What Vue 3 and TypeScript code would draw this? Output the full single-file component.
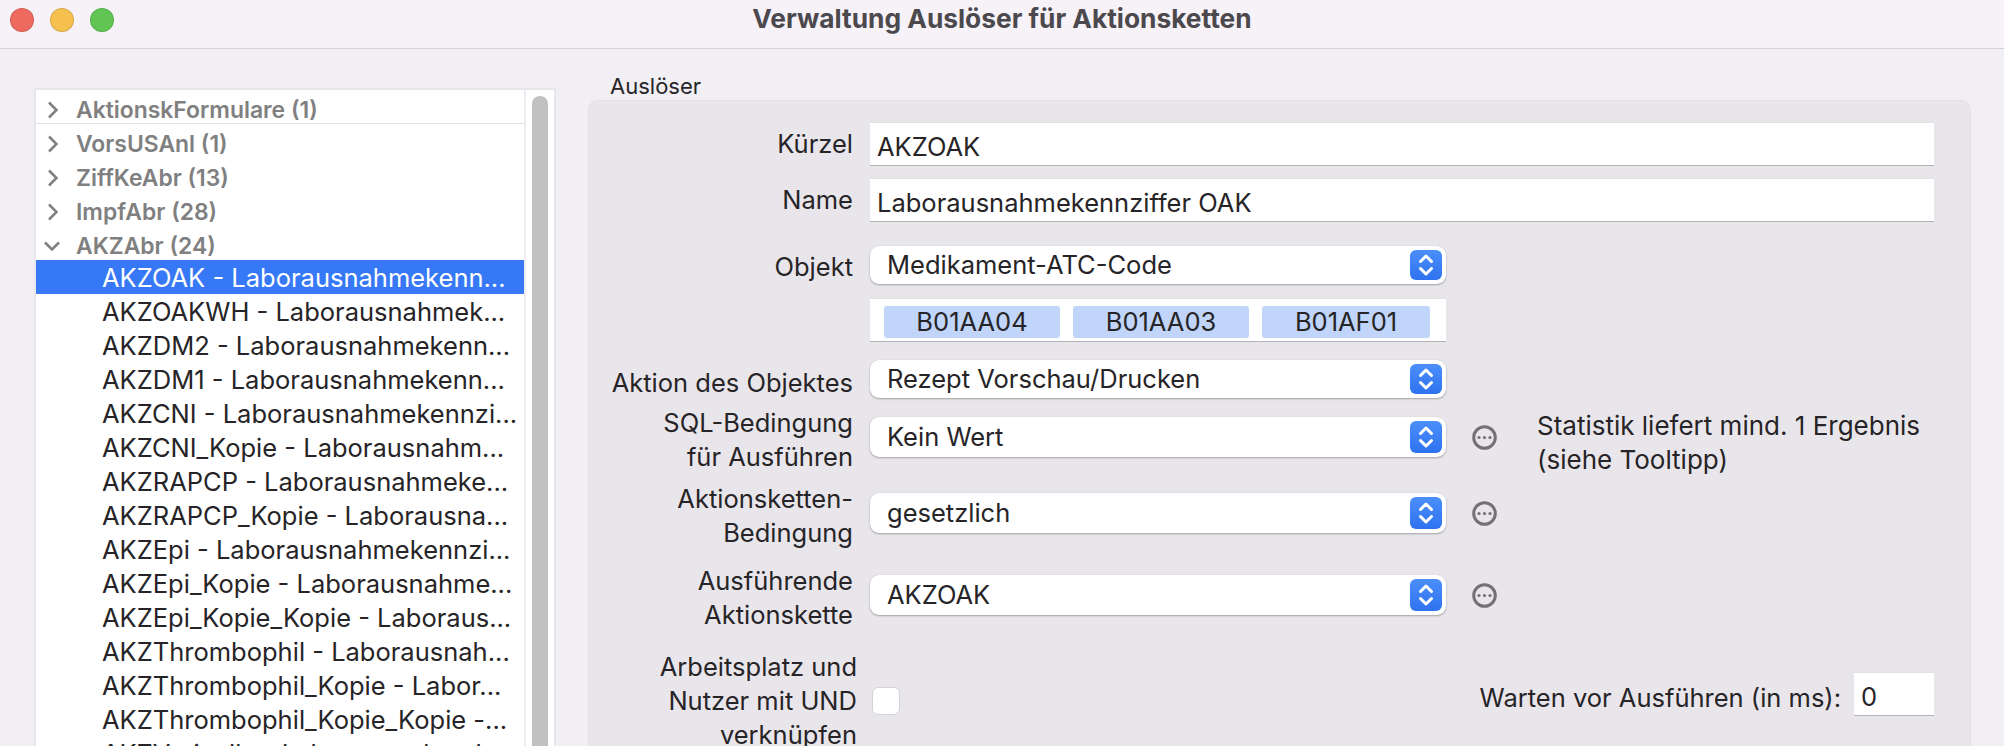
<script setup lang="ts">
interface Group { name: string; open?: boolean }
const groups: Group[] = [
  { name: 'AktionskFormulare (1)' },
  { name: 'VorsUSAnl (1)' },
  { name: 'ZiffKeAbr (13)' },
  { name: 'ImpfAbr (28)' },
  { name: 'AKZAbr (24)', open: true },
]
const items: string[] = [
  'AKZOAK - Laborausnahmekenn...',
  'AKZOAKWH - Laborausnahmek...',
  'AKZDM2 - Laborausnahmekenn...',
  'AKZDM1 - Laborausnahmekenn...',
  'AKZCNI - Laborausnahmekennzi...',
  'AKZCNI_Kopie - Laborausnahm...',
  'AKZRAPCP - Laborausnahmeke...',
  'AKZRAPCP_Kopie - Laborausna...',
  'AKZEpi - Laborausnahmekennzi...',
  'AKZEpi_Kopie - Laborausnahme...',
  'AKZEpi_Kopie_Kopie - Laboraus...',
  'AKZThrombophil - Laborausnah...',
  'AKZThrombophil_Kopie - Labor...',
  'AKZThrombophil_Kopie_Kopie -...',
  'AKZVaricella - Laborausnahmek...',
]
const tokens: string[] = ['B01AA04', 'B01AA03', 'B01AF01']
</script>

<template>
  <div class="window">
    <header class="titlebar">
      <div class="lights">
        <span class="light red"></span>
        <span class="light yellow"></span>
        <span class="light green"></span>
      </div>
      <h1 class="title">Verwaltung Auslöser für Aktionsketten</h1>
    </header>

    <main class="content">
      <aside class="list-frame">
        <div class="list">
          <div
            v-for="(g, i) in groups"
            :key="g.name"
            class="group-row"
            :class="{ first: i === 0 }"
          >
            <svg class="chev" width="20" height="20" viewBox="0 0 20 20">
              <path v-if="g.open" d="M1 6.500l7 7 7-7" />
              <path v-else d="M5 2.500l7.500 7.500-7.500 7.500" />
            </svg>
            <span>{{ g.name }}</span>
          </div>
          <div v-for="(t, i) in items" :key="t" class="item-row" :class="{ selected: i === 0 }">{{ t }}</div>
        </div>
        <div class="track"><div class="thumb"></div></div>
      </aside>

      <section class="group-wrap">
        <div class="group-title">Auslöser</div>
        <div class="box">
          <div class="row r-kuerzel">
            <label class="lbl">Kürzel</label>
            <div class="field wide">AKZOAK</div>
          </div>
          <div class="row r-name">
            <label class="lbl">Name</label>
            <div class="field wide">Laborausnahmekennziffer OAK</div>
          </div>
          <div class="row r-objekt">
            <label class="lbl">Objekt</label>
            <div class="select">
              <span>Medikament-ATC-Code</span>
              <span class="stepper"><svg width="32" height="30" viewBox="0 0 32 30"><path d="M10.5 11.5L16 6l5.500 5.500M10.500 18.500L16 24l5.500-5.500" /></svg></span>
            </div>
          </div>
          <div class="row r-tokens">
            <span class="lbl"></span>
            <div class="tokenfield">
              <span v-for="t in tokens" :key="t" class="token">{{ t }}</span>
            </div>
          </div>
          <div class="row r-aktion">
            <label class="lbl">Aktion des Objektes</label>
            <div class="select">
              <span>Rezept Vorschau/Drucken</span>
              <span class="stepper"><svg width="32" height="30" viewBox="0 0 32 30"><path d="M10.5 11.5L16 6l5.500 5.500M10.500 18.500L16 24l5.500-5.500" /></svg></span>
            </div>
          </div>
          <div class="row two r-sql">
            <label class="lbl">SQL-Bedingung<br />für Ausführen</label>
            <div class="select tall">
              <span>Kein Wert</span>
              <span class="stepper"><svg width="32" height="32" viewBox="0 0 32 32"><path d="M10.500 12.500L16 7l5.500 5.500M10.500 19.500L16 25l5.500-5.500" /></svg></span>
            </div>
            <svg class="more" width="25" height="25" viewBox="0 0 25 25"><circle cx="12.500" cy="12.500" r="10.800" /><circle class="dot" cx="7" cy="12.500" r="1.600" /><circle class="dot" cx="12.500" cy="12.500" r="1.600" /><circle class="dot" cx="18" cy="12.500" r="1.600" /></svg>
            <p class="hint">Statistik liefert mind. 1 Ergebnis<br />(siehe Tooltipp)</p>
          </div>
          <div class="row two r-kette">
            <label class="lbl">Aktionsketten-<br />Bedingung</label>
            <div class="select tall">
              <span>gesetzlich</span>
              <span class="stepper"><svg width="32" height="32" viewBox="0 0 32 32"><path d="M10.500 12.500L16 7l5.500 5.500M10.500 19.500L16 25l5.500-5.500" /></svg></span>
            </div>
            <svg class="more" width="25" height="25" viewBox="0 0 25 25"><circle cx="12.500" cy="12.500" r="10.800" /><circle class="dot" cx="7" cy="12.500" r="1.600" /><circle class="dot" cx="12.500" cy="12.500" r="1.600" /><circle class="dot" cx="18" cy="12.500" r="1.600" /></svg>
          </div>
          <div class="row two r-ausf">
            <label class="lbl">Ausführende<br />Aktionskette</label>
            <div class="select tall">
              <span>AKZOAK</span>
              <span class="stepper"><svg width="32" height="32" viewBox="0 0 32 32"><path d="M10.500 12.500L16 7l5.500 5.500M10.500 19.500L16 25l5.500-5.500" /></svg></span>
            </div>
            <svg class="more" width="25" height="25" viewBox="0 0 25 25"><circle cx="12.500" cy="12.500" r="10.800" /><circle class="dot" cx="7" cy="12.500" r="1.600" /><circle class="dot" cx="12.500" cy="12.500" r="1.600" /><circle class="dot" cx="18" cy="12.500" r="1.600" /></svg>
          </div>
          <div class="row r-last">
            <label class="lbl three">Arbeitsplatz und<br />Nutzer mit UND<br />verknüpfen</label>
            <span class="check"></span>
            <div class="wait">
              <span class="wait-label">Warten vor Ausführen (in ms):</span>
              <div class="field small">0</div>
            </div>
          </div>
        </div>
      </section>
    </main>
  </div>
</template>

<style>
html, body { margin: 0; background: #f2eff4; overflow: hidden; }
</style>

<style scoped>
.window {
  width: 2004px;
  height: 746px;
  overflow: hidden;
  background: #f2eff4;
  color: #262427;
  font-family: Inter, "Liberation Sans", sans-serif;
  font-size: 25.500px;
}
.titlebar {
  height: 48px;
  background: #f6f2f8;
  border-bottom: 1px solid #d5d1d8;
  display: flex;
  align-items: center;
  position: relative;
}
.lights { position: absolute; left: 10px; top: 8px; display: flex; gap: 16px; }
.light { width: 24px; height: 24px; border-radius: 50%; box-sizing: border-box; border: 1px solid rgba(0,0,0,.12); }
.red { background: #ee6a5f; }
.yellow { background: #f6c04f; }
.green { background: #61c554; }
.title {
  margin: 0;
  width: 100%;
  text-align: center;
  font-size: 26.300px;
  font-weight: 700;
  color: #4b494d;
  padding-bottom: 10px;
  line-height: 30px;
}
.content { display: flex; align-items: flex-start; height: 697px; }

/* list */
.list-frame {
  margin: 39px 0 0 34px;
  width: 522px;
  height: 700px;
  box-sizing: border-box;
  border: 2px solid #e8e6ea;
  border-bottom: 0;
  display: flex;
  background: #fff;
  overflow: hidden;
}
.list { width: 488px; border-right: 2px solid #efedf1; overflow: hidden; flex: none; }
.group-row {
  height: 34px;
  line-height: 40px;
  color: #808081;
  font-weight: 600;
  font-size: 22.900px;
  padding-left: 40px;
  position: relative;
}
.group-row.first { border-bottom: 1px solid #e4e2e6; height: 33px; }
.chev { position: absolute; left: 8px; top: 10px; }
.chev path { fill: none; stroke: #808081; stroke-width: 2.500; }
.item-row {
  height: 34px;
  line-height: 36px;
  padding-left: 66px;
  white-space: nowrap;
  overflow: hidden;
}
.item-row.selected { background: #3678f6; color: #fff; }
.track { flex: 1; position: relative; }
.thumb {
  position: absolute;
  left: 6px;
  top: 6px;
  width: 16px;
  height: 800px;
  border-radius: 8px;
  background: #c1c1c1;
}

/* group box */
.group-wrap { margin-left: 32px; width: 1383px; }
.group-title { margin: 21px 0 0 22px; height: 30px; line-height: 32px; font-size: 22px; }
.box {
  background: #e9e6eb;
  border-radius: 10px;
  height: 700px;
  box-sizing: border-box;
  padding: 23px 37px 0 0;
  box-shadow: inset 0 0 0 1px #e4e1e6;
}
.row { display: flex; align-items: center; }
.lbl { width: 265px; margin-right: 17px; text-align: right; flex: none; line-height: 34px; }
.field {
  height: 42px;
  line-height: 42px;
  background: #fff;
  box-sizing: border-box;
  padding: 3px 0 0 7px;
  box-shadow: 0 1px 0 #b4b2b6, 0 -1px 0 #e2e0e4;
}
.wide { flex: 1; }
.r-name { margin-top: 14px; }
.r-objekt { margin-top: 25px; height: 38px; }
.r-objekt .lbl { margin-top: 4px; }
.r-tokens { margin-top: 15px; }
.r-aktion { margin-top: 19px; height: 38px; }
.r-aktion .lbl { margin-top: 8px; }
.two { height: 68px; margin-top: 8px; align-items: flex-start; }
.r-ausf { margin-top: 14px; }
.select {
  width: 576px;
  height: 38px;
  flex: none;
  display: flex;
  align-items: center;
  justify-content: space-between;
  box-sizing: border-box;
  padding: 0 4px 0 17px;
  background: #fff;
  border-radius: 9px;
  box-shadow: 0 1px 2px rgba(0,0,0,.3), 0 0 1px rgba(0,0,0,.1);
}
.select > span:first-child { margin-top: -2px; }
.select.tall { height: 40px; margin-top: 11px; }
.stepper {
  width: 32px;
  height: 30px;
  border-radius: 6px;
  background: linear-gradient(#4b8ffa, #2f72f0);
  display: block;
}
.tall .stepper { height: 32px; }
.stepper svg { display: block; }
.stepper path { fill: none; stroke: #fff; stroke-width: 3; stroke-linecap: round; stroke-linejoin: round; }
.tokenfield {
  width: 576px;
  height: 42px;
  box-sizing: border-box;
  background: #fff;
  padding: 7px 0 4px 14px;
  display: flex;
  gap: 13px;
  box-shadow: 0 1px 0 #b4b2b6, 0 -1px 0 #e2e0e4;
}
.token {
  width: 176px;
  height: 32px;
  line-height: 32px;
  text-align: center;
  background: #c0d5f9;
  border-radius: 3px;
}
.token:last-child { width: 168px; }
.more { margin: 19px 0 0 26px; flex: none; }
.more circle { fill: none; stroke: #737174; stroke-width: 3; }
.more .dot { fill: #737174; stroke: none; }
.hint { margin: 3px 0 0 40px; line-height: 34px; white-space: nowrap; font-size: 26px; }
.r-last { margin-top: 18px; height: 102px; }
.three { margin-right: 15px; width: 269px; }
.check {
  width: 28px;
  height: 28px;
  box-sizing: border-box;
  border: 1px solid #d4d2d6;
  border-radius: 6px;
  background: #fff;
  flex: none;
}
.wait { margin-left: auto; margin-bottom: 14px; display: flex; align-items: center; gap: 13px; }
.wait-label { margin-top: 6px; }
.small { width: 80px; }
</style>
